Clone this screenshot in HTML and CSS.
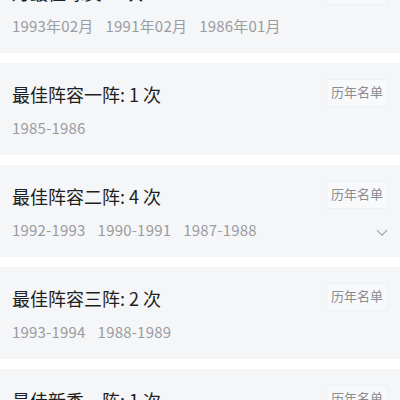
FILE: index.html
```html
<!DOCTYPE html>
<html lang="zh-CN">
<head>
<meta charset="utf-8">
<link rel="stylesheet" href="styles.css">
</head>
<body>
<div class="list">
  <div class="card">
    <div class="head">
      <div class="title">月最佳球员: 3 次</div>
      <div class="badge">历年名单</div>
    </div>
    <div class="years"><span>1993年02月</span><span>1991年02月</span><span>1986年01月</span></div>
  </div>
  <div class="card">
    <div class="head">
      <div class="title">最佳阵容一阵: 1 次</div>
      <div class="badge">历年名单</div>
    </div>
    <div class="years"><span>1985-1986</span></div>
  </div>
  <div class="card">
    <div class="head">
      <div class="title">最佳阵容二阵: 4 次</div>
      <div class="badge">历年名单</div>
    </div>
    <div class="years"><span>1992-1993</span><span>1990-1991</span><span>1987-1988</span>
      <svg class="chev" width="12" height="8" viewBox="0 0 12 8"><path d="M1 1.2 L6 6.2 L11 1.2" fill="none" stroke="#9fa2a7" stroke-width="1.2"/></svg>
    </div>
  </div>
  <div class="card">
    <div class="head">
      <div class="title">最佳阵容三阵: 2 次</div>
      <div class="badge">历年名单</div>
    </div>
    <div class="years"><span>1993-1994</span><span>1988-1989</span></div>
  </div>
  <div class="card">
    <div class="head">
      <div class="title">最佳新秀一阵: 1 次</div>
      <div class="badge">历年名单</div>
    </div>
    <div class="years"><span>1984-1985</span></div>
  </div>
</div>
</body>
</html>
```
FILE: styles.css
```css
html, body {
  margin: 0;
  padding: 0;
  background: #ffffff;
  overflow: hidden;
}
body {
  font-family: "Noto Sans CJK SC", "Noto Sans", sans-serif;
}
.list {
  display: flex;
  flex-direction: column;
  gap: 10px;
  margin-top: -39px;
}
.card {
  background: #f5f6f8;
  padding: 18px 12px 16px 12px;
}
.head {
  display: flex;
  justify-content: space-between;
  align-items: flex-start;
  height: 26px;
  margin-bottom: 10px;
}
.title {
  font-size: 18px;
  line-height: 26px;
  color: #1e1f22;
}
.badge {
  margin-top: -2px;
  height: 26px;
  line-height: 24px;
  padding: 0 4px;
  font-size: 13px;
  color: #8a8c90;
  background: #f8f9fa;
  border: 1px solid #eff0f2;
  white-space: nowrap;
  text-align: center;
}
.years {
  display: flex;
  align-items: center;
  gap: 12px;
  font-size: 15px;
  line-height: 22px;
  height: 22px;
  color: #9a9ca0;
  letter-spacing: 0.2px;
}
.chev {
  margin-left: auto;
  margin-top: 6px;
}
```
